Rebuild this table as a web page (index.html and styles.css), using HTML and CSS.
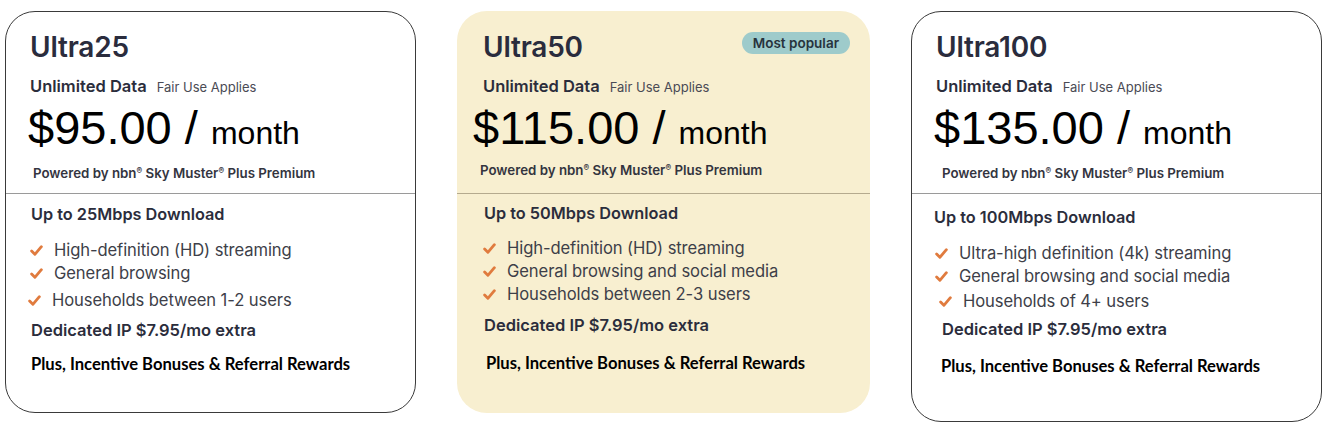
FILE: index.html
```html
<!DOCTYPE html>
<html lang="en">
<head>
<meta charset="utf-8">
<title>Plans</title>
<link rel="stylesheet" href="styles.css">
</head>
<body>
<div class="plans">
  <section class="card card-1">
    <h2 class="title">Ultra25</h2>
    <p class="data"><strong>Unlimited Data</strong><span class="fair">Fair Use Applies</span></p>
    <p class="price">$95.00 / <span class="per">month</span></p>
    <p class="powered">Powered by nbn<sup>®</sup> Sky Muster<sup>®</sup> Plus Premium</p>
    <hr class="rule">
    <p class="speed">Up to 25Mbps Download</p>
    <ul class="features">
      <li><svg class="tick" viewBox="0 0 12 10"><path d="M1.5 5.5 L4.5 8.5 L10.5 1.5"/></svg>High-definition (HD) streaming</li>
      <li><svg class="tick" viewBox="0 0 12 10"><path d="M1.5 5.5 L4.5 8.5 L10.5 1.5"/></svg>General browsing</li>
      <li class="shift-l"><svg class="tick" viewBox="0 0 12 10"><path d="M1.5 5.5 L4.5 8.5 L10.5 1.5"/></svg>Households between 1-2 users</li>
    </ul>
    <p class="extra">Dedicated IP $7.95/mo extra</p>
    <p class="bonus">Plus, Incentive Bonuses &amp; Referral Rewards</p>
  </section>

  <section class="card card-2">
    <div class="head">
      <h2 class="title">Ultra50</h2>
      <span class="badge">Most popular</span>
    </div>
    <p class="data"><strong>Unlimited Data</strong><span class="fair">Fair Use Applies</span></p>
    <p class="price">$115.00 / <span class="per">month</span></p>
    <p class="powered">Powered by nbn<sup>®</sup> Sky Muster<sup>®</sup> Plus Premium</p>
    <hr class="rule">
    <p class="speed">Up to 50Mbps Download</p>
    <ul class="features">
      <li><svg class="tick" viewBox="0 0 12 10"><path d="M1.5 5.5 L4.5 8.5 L10.5 1.5"/></svg>High-definition (HD) streaming</li>
      <li><svg class="tick" viewBox="0 0 12 10"><path d="M1.5 5.5 L4.5 8.5 L10.5 1.5"/></svg>General browsing and social media</li>
      <li><svg class="tick" viewBox="0 0 12 10"><path d="M1.5 5.5 L4.5 8.5 L10.5 1.5"/></svg>Households between 2-3 users</li>
    </ul>
    <p class="extra">Dedicated IP $7.95/mo extra</p>
    <p class="bonus">Plus, Incentive Bonuses &amp; Referral Rewards</p>
  </section>

  <section class="card card-3">
    <h2 class="title">Ultra100</h2>
    <p class="data"><strong>Unlimited Data</strong><span class="fair">Fair Use Applies</span></p>
    <p class="price">$135.00 / <span class="per">month</span></p>
    <p class="powered">Powered by nbn<sup>®</sup> Sky Muster<sup>®</sup> Plus Premium</p>
    <hr class="rule">
    <p class="speed">Up to 100Mbps Download</p>
    <ul class="features">
      <li><svg class="tick" viewBox="0 0 12 10"><path d="M1.5 5.5 L4.5 8.5 L10.5 1.5"/></svg>Ultra-high definition (4k) streaming</li>
      <li><svg class="tick" viewBox="0 0 12 10"><path d="M1.5 5.5 L4.5 8.5 L10.5 1.5"/></svg>General browsing and social media</li>
      <li class="shift-r"><svg class="tick" viewBox="0 0 12 10"><path d="M1.5 5.5 L4.5 8.5 L10.5 1.5"/></svg>Households of 4+ users</li>
    </ul>
    <p class="extra">Dedicated IP $7.95/mo extra</p>
    <p class="bonus">Plus, Incentive Bonuses &amp; Referral Rewards</p>
  </section>
</div>
</body>
</html>
```

FILE: styles.css
```css
* { box-sizing: border-box; }

html, body {
  margin: 0;
  padding: 0;
  background: #ffffff;
}

body {
  font-family: "Inter", "Noto Sans", sans-serif;
  color: #2b2d3c;
}

.plans {
  display: flex;
  align-items: flex-start;
  gap: 41px;
  padding: 11px 0 0 5px;
}

.card {
  width: 411px;
  height: 402px;
  border: 1px solid #3a3a3a;
  border-radius: 30px;
  padding: 19px 24px 0 24px;
  background: #ffffff;
}

.card-2 {
  width: 413px;
  border: none;
  background: #f8efd0;
  padding: 20px 24px 0 26px;
}

.card-3 {
  height: 411px;
  padding-left: 24px;
}

p, h2, ul { margin: 0; }

.head {
  display: flex;
  justify-content: space-between;
  align-items: flex-start;
}

.title {
  font-size: 28px;
  line-height: 32px;
  font-weight: 600;
  letter-spacing: -0.2px;
  color: #2a2c3d;
}

.badge {
  margin-top: 1px;
  margin-right: -4px;
  height: 22px;
  padding: 0 11px;
  border-radius: 11px;
  background: #9ecbcb;
  color: #27333d;
  font-size: 13.5px;
  font-weight: 600;
  line-height: 22px;
}

.data {
  margin-top: 13px;
  line-height: 20px;
  display: flex;
  align-items: baseline;
  gap: 10px;
}

.data strong {
  font-size: 16.5px;
  font-weight: 600;
  color: #2b2d3c;
}

.fair {
  font-size: 13px;
  color: #4a4b55;
}

.price {
  margin-top: 6px;
  margin-left: -2px;
  font-family: "Liberation Sans", Arial, sans-serif;
  font-size: 47px;
  line-height: 50px;
  color: #000000;
}

.card-2 .price { margin-left: -10px; }

.per {
  font-size: 32px;
}

.powered {
  margin-top: 7px;
  margin-left: 3px;
  font-size: 13.3px;
  line-height: 16px;
  font-weight: 600;
  color: #34353f;
}

.card-2 .powered { margin-left: -3px; margin-top: 4px; }
.card-3 .powered { margin-left: 6px; }

.powered sup {
  font-size: 8.5px;
  vertical-align: 4px;
  line-height: 0;
}

.rule {
  margin: 12px -24px 0 -24px;
  border: none;
  border-top: 1px solid #9a9a9a;
  height: 0;
}

.card-2 .rule { margin-left: -26px; margin-top: 15px; border-top-color: #b5aa8e; }

.speed {
  margin-top: 10px;
  font-size: 16.3px;
  line-height: 20px;
  font-weight: 600;
  color: #2b2d3c;
  margin-left: 1px;
}

.card-2 .speed { margin-top: 9px; }
.card-3 .speed { margin-top: 13px; margin-left: -2px; }

.features {
  list-style: none;
  padding: 0;
  margin-top: 15px;
}

.card-2 .features { margin-top: 14px; }
.card-3 .features { margin-top: 15px; }

.features li {
  display: flex;
  align-items: center;
  gap: 11px;
  font-size: 16.6px;
  line-height: 23px;
  color: #3e3f49;
  letter-spacing: -0.1px;
  margin-left: 0;
}

.card-1 .features li.shift-l { margin-top: 4px; margin-left: -2px; }
.card-3 .features li.shift-r { margin-top: 2px; margin-left: 3px; }
.card-3 .features li { margin-left: -1px; }

.tick {
  width: 13px;
  height: 11px;
  flex: none;
  fill: none;
  stroke: #e07b3e;
  stroke-width: 2.6;
  stroke-linecap: round;
  stroke-linejoin: round;
}

.extra {
  margin-top: 8px;
  font-size: 16.5px;
  line-height: 20px;
  font-weight: 600;
  color: #2b2d3c;
  margin-left: 1px;
}

.card-2 .extra { margin-top: 9px; }
.card-3 .extra { margin-left: 6px; margin-top: 6px; }

.bonus {
  margin-top: 14px;
  font-family: "Lato", "Open Sans", sans-serif;
  font-size: 16.6px;
  line-height: 20px;
  font-weight: 700;
  color: #000000;
  margin-left: 1px;
}

.card-2 .bonus { margin-top: 18px; margin-left: 3px; }
.card-3 .bonus { margin-top: 17px; margin-left: 5px; }
```
